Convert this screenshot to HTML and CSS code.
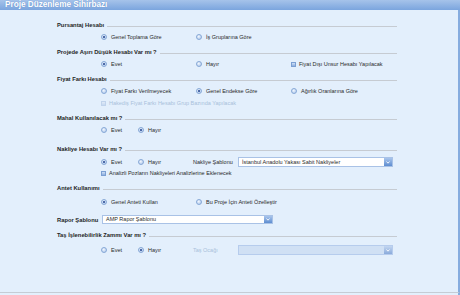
FILE: index.html
```html
<!DOCTYPE html>
<html lang="tr">
<head>
<meta charset="UTF-8" />
<title>Proje Düzenleme Sihirbazı</title>
<link rel="stylesheet" href="styles.css">
</head>
<body>

<div class="wizard">
  <div class="titlebar">Proje Düzenleme Sihirbazı</div>

  <div class="content">

    <!-- Pursantaj -->
    <div class="group">
      <div class="group-title"><span>Pursantaj Hesabı</span></div>
      <div class="opts cols3">
        <label class="opt"><span class="radio on"></span>Genel Toplama Göre</label>
        <label class="opt"><span class="radio"></span>İş Gruplarına Göre</label>
      </div>
    </div>

    <!-- Aşırı düşük -->
    <div class="group">
      <div class="group-title"><span>Projede Aşırı Düşük Hesabı Var mı ?</span></div>
      <div class="opts cols3">
        <label class="opt"><span class="radio on"></span>Evet</label>
        <label class="opt"><span class="radio"></span>Hayır</label>
        <label class="opt"><span class="check"></span>Fiyat Dışı Unsur Hesabı Yapılacak</label>
      </div>
    </div>

    <!-- Fiyat farkı -->
    <div class="group">
      <div class="group-title"><span>Fiyat Farkı Hesabı</span></div>
      <div class="opts cols3">
        <label class="opt"><span class="radio"></span>Fiyat Farkı Verilmeyecek</label>
        <label class="opt"><span class="radio on"></span>Genel Endekse Göre</label>
        <label class="opt"><span class="radio"></span>Ağırlık Oranlarına Göre</label>
      </div>
      <div class="opts">
        <label class="opt disabled"><span class="check"></span>Hakediş Fiyat Farkı Hesabı Grup Bazında Yapılacak</label>
      </div>
    </div>

    <!-- Mahal -->
    <div class="group">
      <div class="group-title"><span>Mahal Kullanılacak mı ?</span></div>
      <div class="opts yesno">
        <label class="opt"><span class="radio"></span>Evet</label>
        <label class="opt"><span class="radio on"></span>Hayır</label>
      </div>
    </div>

    <!-- Nakliye -->
    <div class="group wide">
      <div class="group-title"><span>Nakliye Hesabı Var mı ?</span></div>
      <div class="opts yesno">
        <label class="opt"><span class="radio on"></span>Evet</label>
        <label class="opt"><span class="radio"></span>Hayır</label>
        <span class="field-label">Nakliye Şablonu</span>
        <div class="select">
          <span class="select-text">İstanbul Anadolu Yakası Sabit Nakliyeler</span>
          <span class="select-btn"><svg width="4" height="3" viewBox="0 0 4 3"><polyline points="0.5,0.5 2,2.2 3.5,0.5" fill="none" stroke="#fff" stroke-width="0.9"/></svg></span>
        </div>
      </div>
      <div class="opts">
        <label class="opt"><span class="check"></span>Analizli Pozların Nakliyeleri Analizlerine Eklenecek</label>
      </div>
    </div>

    <!-- Antet -->
    <div class="group">
      <div class="group-title"><span>Antet Kullanımı</span></div>
      <div class="opts cols3 loose">
        <label class="opt"><span class="radio on"></span>Genel Anteti Kullan</label>
        <label class="opt"><span class="radio"></span>Bu Proje İçin Anteti Özelleştir</label>
      </div>
    </div>

    <!-- Rapor şablonu -->
    <div class="report-row">
      <span class="report-label">Rapor Şablonu</span>
      <div class="select">
        <span class="select-text">AMP Rapor Şablonu</span>
        <span class="select-btn"><svg width="4" height="3" viewBox="0 0 4 3"><polyline points="0.5,0.5 2,2.2 3.5,0.5" fill="none" stroke="#fff" stroke-width="0.9"/></svg></span>
      </div>
    </div>

    <!-- Taş işlenebilirlik -->
    <div class="group">
      <div class="group-title"><span>Taş İşlenebilirlik Zammı Var mı ?</span></div>
      <div class="opts yesno loose">
        <label class="opt"><span class="radio"></span>Evet</label>
        <label class="opt"><span class="radio on"></span>Hayır</label>
        <span class="field-label disabled">Taş Ocağı</span>
        <div class="select disabled">
          <span class="select-text"></span>
          <span class="select-btn"><svg width="4" height="3" viewBox="0 0 4 3"><polyline points="0.5,0.5 2,2.2 3.5,0.5" fill="none" stroke="#fff" stroke-width="0.9"/></svg></span>
        </div>
      </div>
    </div>

  </div>

  <div class="footer"></div>
</div>

</body>
</html>
```

FILE: styles.css
```css
/* Base */
html, body {
  margin: 0; padding: 0;
  font-family: 'Liberation Sans', Arial, sans-serif;
  background: #e3effc;
  color: #2a2a2a;
}
.wizard {
  width: 460px;
  height: 295px;
  overflow: hidden;
  background: #e3effc;
}

/* Title bar */
.titlebar {
  height: 10px;
  line-height: 10px;
  padding-left: 5px;
  font-size: 8.2px;
  font-weight: bold;
  color: #fff;
  background: linear-gradient(#a6c3ea, #7ba5de);
  text-shadow: 0 0 1px #5a86c4;
  white-space: nowrap;
}

/* Body of the wizard */
.content {
  height: 282px;
  box-sizing: border-box;
  padding: 11px 0 0 57px;
  border-left: 2px solid #d3e3f6;
  border-right: 2px solid #86acdf;
  margin-left: -2px;
}
.footer {
  border-top: 1px solid #c5ccd5;
  height: 2px;
  border-right: 2px solid #86acdf;
}

/* Groups */
.group {
  margin-top: 7px;
}
.group:first-child {
  margin-top: 0;
}
.group.wide {
  margin-top: 11px;
}
.group-title {
  width: 340px;
  height: 8px;
  display: flex;
  align-items: center;
  font-size: 5.8px;
  font-weight: bold;
  color: #1f1f1f;
  white-space: nowrap;
}
.group-title::after {
  content: '';
  flex: 1;
  border-top: 1px solid #c6cbd2;
  margin-left: 3px;
  position: relative;
  top: 1px;
}

/* Option rows */
.opts {
  height: 8px;
  margin-top: 4px;
  padding-left: 44px;
  display: grid;
  grid-auto-flow: column;
  justify-content: start;
  align-items: center;
  font-size: 5.5px;
}
.opts.loose {
  margin-top: 6px;
}
.opts.cols3 {
  grid-template-columns: 95px 95px auto;
}
.opts.yesno {
  grid-template-columns: 37px 55px 45px 155px;
}
.opt {
  display: flex;
  align-items: center;
  white-space: nowrap;
}
.opt.disabled, .field-label.disabled {
  color: #a9bfdb;
}
.field-label {
  white-space: nowrap;
}

.radio {
  width: 6px;
  height: 6px;
  box-sizing: border-box;
  border-radius: 50%;
  border: 1px solid #86a8d6;
  background: radial-gradient(circle at 40% 35%, #f2f7fe, #a7c3ea);
  margin-right: 4px;
  display: flex;
  align-items: center;
  justify-content: center;
}
.radio.on::after {
  content: '';
  width: 2px;
  height: 2px;
  border-radius: 50%;
  background: #1d3f8c;
}
.check {
  width: 5px;
  height: 5px;
  box-sizing: border-box;
  border: 1px solid #7b9fd3;
  background: linear-gradient(#cfe0f7, #8daede);
  margin-right: 3px;
}
.opt.disabled .check {
  border-color: #c0d3ec;
  background: linear-gradient(#e1ebf8, #c6d8f0);
}

/* Select boxes */
.select {
  height: 10px;
  box-sizing: border-box;
  border: 1px solid #a9c2e6;
  background: #fff;
  display: flex;
  align-items: stretch;
  font-size: 5.5px;
}
.select-text {
  flex: 1;
  padding-left: 3px;
  line-height: 8px;
  white-space: nowrap;
  overflow: hidden;
}
.select-btn {
  width: 8px;
  background: linear-gradient(#a9c5ec, #5e8dd0);
  display: flex;
  align-items: center;
  justify-content: center;
}
.select.disabled {
  background: #d0e0f4;
  border-color: #b6cced;
}
.select.disabled .select-btn {
  background: linear-gradient(#c3d6f1, #8aaadb);
}

/* Rapor şablonu */
.report-row {
  margin-top: 9px;
  height: 9px;
  display: flex;
  align-items: center;
}
.report-label {
  width: 45px;
  font-size: 5.8px;
  font-weight: bold;
  color: #1f1f1f;
  white-space: nowrap;
}
.report-row .select {
  width: 171px;
  height: 9px;
}
.report-row .select-text {
  line-height: 7px;
}
```
